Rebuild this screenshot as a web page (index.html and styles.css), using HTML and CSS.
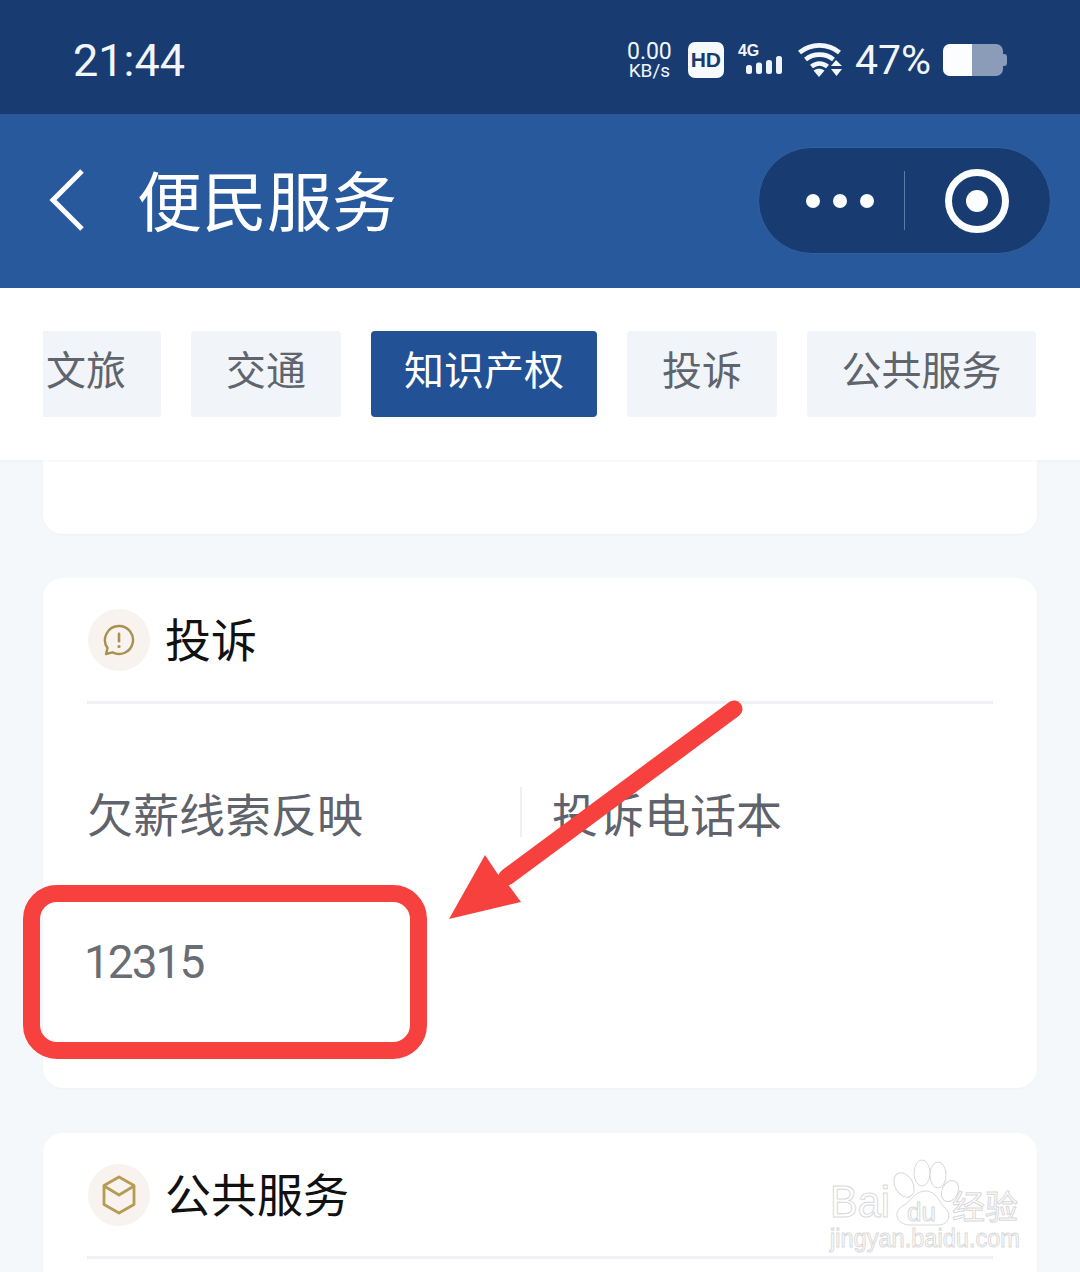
FILE: index.html
```html
<!DOCTYPE html>
<html lang="zh">
	<head>
		<meta charset="utf-8" />
		<title>便民服务</title>
		<link rel="stylesheet" href="styles.css">
	</head>
	<body>
		<div class="page">
			<div class="status-bar">
				<span class="clock">21:44</span>
				<div class="status-icons">
					<div class="speed"><span class="speed-num">0.00</span><span class="speed-unit">KB/s</span></div>
					<span class="hd">HD</span>
					<div class="signal">
						<span class="signal-label">4G</span>
						<svg class="signal-bars" width="36" height="18" viewBox="0 0 36 18">
							<rect x="0" y="9" width="6" height="9" rx="2.5" fill="#eef4fa" />
							<rect x="10" y="6.5" width="6" height="11.5" rx="2.5" fill="#eef4fa" />
							<rect x="20" y="4" width="6" height="14" rx="2.5" fill="#eef4fa" />
							<rect x="30" y="0" width="6" height="18" rx="2.5" fill="#eef4fa" />
						</svg>
					</div>
					<svg class="wifi" width="45" height="36" viewBox="0 0 45 36">
						<g fill="none" stroke="#f5f8fb" stroke-width="4.6">
							<path d="M1.5 10.5C13 1 30 1 41.5 10.5" />
							<path d="M7.5 17.5C15.5 11 27.5 11 35.5 17.5" />
							<path d="M13.5 24.5C18.5 20.5 24.5 20.5 29.5 24.5" />
						</g>
						<path d="M15.5 28.5C19 26 23 26 26.5 28.5L21 35Z" fill="#f5f8fb" />
						<path d="M33 24L38 18L44 24Z" fill="#f5f8fb" />
						<path d="M33 27H44L38.500 34Z" fill="#f5f8fb" />
					</svg>
					<span class="percent">47%</span>
					<div class="battery"><div class="battery-fill"></div></div>
				</div>
			</div>
			<div class="nav-bar">
				<svg class="back" width="38" height="64" viewBox="0 0 38 64">
					<path d="M34 3L5 32L34 61" fill="none" stroke="#fff" stroke-width="5" />
				</svg>
				<h1 class="nav-title">便民服务</h1>
				<div class="capsule">
					<div class="capsule-dots"><i></i><i></i><i></i></div>
					<div class="capsule-line"></div>
					<div class="capsule-target"><i></i></div>
				</div>
			</div>
			<div class="tabs-wrap">
				<div class="tabs">
					<a class="tab tab-first">文旅</a>
					<a class="tab">交通</a>
					<a class="tab tab-wide active">知识产权</a>
					<a class="tab">投诉</a>
					<a class="tab tab-last">公共服务</a>
				</div>
			</div>
			<div class="content">
				<div class="card card-stub"></div>
				<div class="card card-complain">
					<div class="card-head">
						<span class="head-icon">
							<svg width="34" height="34" viewBox="0 0 34 34">
								<path d="M17 3A14 14 0 1 1 10.500 29.400L4 31L5.500 25A14 14 0 0 1 17 3Z" fill="none" stroke="#a8914f" stroke-width="2.400" stroke-linejoin="round" />
								<rect x="15.700" y="9.500" width="2.600" height="10" rx="1.300" fill="#a8914f" />
								<circle cx="17" cy="23.500" r="1.600" fill="#a8914f" />
							</svg>
						</span>
						<span class="head-title">投诉</span>
					</div>
					<div class="links links-top">
						<span class="link link-left">欠薪线索反映</span>
						<span class="link link-right">投诉电话本</span>
					</div>
					<div class="links links-num">
						<span class="link-num">12315</span>
					</div>
				</div>
				<div class="card card-last">
					<div class="card-head">
						<span class="head-icon">
							<svg width="36" height="40" viewBox="0 0 36 40">
								<g fill="none" stroke="#b69c52" stroke-width="2.800" stroke-linejoin="round">
									<path d="M18 2L33 10.500V29.500L18 38L3 29.500V10.500Z" />
									<path d="M3 11L18 20L33 11" />
								</g>
							</svg>
						</span>
						<span class="head-title">公共服务</span>
					</div>
				</div>
			</div>
		</div>

		<!-- red markup drawn over the screenshot -->
		<div class="mark-box"></div>
		<svg class="mark-arrow" width="300" height="230" viewBox="0 0 300 230">
			<path d="M287 10L60 178" fill="none" stroke="#f6413f" stroke-width="17" stroke-linecap="round" />
			<path d="M2 220L38 156L50 174L63 188L74 203Z" fill="#f6413f" />
		</svg>

		<svg class="watermark" width="210" height="110" viewBox="0 0 210 110">
			<g fill="#fff" stroke="#d9d9d9" stroke-width="1">
				<ellipse cx="76" cy="30" rx="9" ry="13" transform="rotate(-30 76 30)" />
				<ellipse cx="94" cy="18" rx="8" ry="13" />
				<ellipse cx="110" cy="20" rx="8" ry="13" />
				<ellipse cx="122" cy="36" rx="8" ry="11" transform="rotate(25 122 36)" />
				<path d="M98 36C108 36 112 48 116 52C124 58 122 70 110 70H82C68 70 64 56 76 50C84 46 86 36 98 36Z" />
				<text x="2" y="62" class="wm-big" textLength="60" lengthAdjust="spacingAndGlyphs">Bai</text>
				<text x="79" y="66" class="wm-du">du</text>
				<text x="124" y="64" class="wm-cn">经验</text>
				<text x="2" y="92" class="wm-url" textLength="190" lengthAdjust="spacingAndGlyphs">jingyan.baidu.com</text>
			</g>
		</svg>
	</body>
</html>
```

FILE: styles.css
```css
* {
	box-sizing: border-box;
}

html,
body {
	margin: 0;
	height: 1272px;
	overflow: hidden;
}

body {
	position: relative;
	width: 1080px;
	background: #f5f8fb;
	font-family: "Noto Sans CJK SC", "Noto Sans", sans-serif;
}

.page {
	display: flex;
	flex-direction: column;
	height: 1272px;
}

/* status bar */
.status-bar {
	flex: none;
	height: 114px;
	padding: 6px 73px 0 73px;
	display: flex;
	align-items: center;
	justify-content: space-between;
	background: #183c72;
	color: #f2f6fa;
}

.clock {
	font-family: Roboto, sans-serif;
	font-size: 45px;
	line-height: 1;
}

.status-icons {
	display: flex;
	align-items: center;
}

.speed {
	width: 45px;
	display: flex;
	flex-direction: column;
	align-items: center;
	font-family: Roboto, sans-serif;
	margin-right: 16px;
}

.speed-num {
	font-size: 23px;
	line-height: 20px;
}

.speed-unit {
	font-size: 19px;
	line-height: 17px;
}

.hd {
	width: 36px;
	height: 36px;
	margin-right: 14px;
	border-radius: 7px;
	background: #f7fafc;
	color: #183c72;
	font-family: "Liberation Sans", sans-serif;
	font-weight: bold;
	font-size: 21px;
	line-height: 36px;
	text-align: center;
}

.signal {
	width: 44px;
	height: 32px;
	margin-right: 16px;
	display: flex;
	flex-direction: column;
}

.signal-label {
	font-family: "Liberation Sans", sans-serif;
	font-weight: bold;
	font-size: 16px;
	line-height: 14px;
}

.signal-bars {
	align-self: flex-end;
	margin-top: -2px;
}

.wifi {
	margin-right: 12px;
}

.percent {
	font-family: Roboto, sans-serif;
	font-size: 41px;
	line-height: 1;
	margin-right: 12px;
}

.battery {
	position: relative;
	width: 60px;
	height: 32px;
	margin-right: 4px;
	border-radius: 7px;
	background: #8b9cb9;
}

.battery::after {
	content: "";
	position: absolute;
	right: -4px;
	top: 10px;
	width: 4px;
	height: 12px;
	border-radius: 0 3px 3px 0;
	background: #8b9cb9;
}

.battery-fill {
	width: 29px;
	height: 100%;
	border-radius: 7px 0 0 7px;
	background: #fbfdfe;
}

/* title bar */
.nav-bar {
	flex: none;
	height: 174px;
	padding: 0 29px 1px 48px;
	display: flex;
	align-items: center;
	background: #27599c;
}

.back {
	flex: none;
	margin-top: -2px;
}

.nav-title {
	margin: -5px 0 0 51px;
	flex: 1;
	color: #fff;
	font-size: 65px;
	font-weight: 400;
	line-height: 1;
}

.capsule {
	flex: none;
	width: 293px;
	height: 107px;
	display: flex;
	align-items: center;
	border: 1px solid #32619f;
	border-radius: 54px;
	background: #183c72;
}

.capsule-dots {
	width: 145px;
	display: flex;
	justify-content: flex-end;
	gap: 13px;
	padding-right: 30px;
}

.capsule-dots i {
	width: 14px;
	height: 14px;
	border-radius: 50%;
	background: #fbfdfe;
}

.capsule-line {
	width: 1px;
	height: 59px;
	background: #5c7ba6;
}

.capsule-target {
	width: 64px;
	height: 64px;
	margin-left: 40px;
	display: flex;
	align-items: center;
	justify-content: center;
	border: 7px solid #fbfdfe;
	border-radius: 50%;
}

.capsule-target i {
	width: 22px;
	height: 22px;
	border-radius: 50%;
	background: #fbfdfe;
}

/* tabs */
.tabs-wrap {
	flex: none;
	height: 172px;
	padding: 43px 43px 0 43px;
	background: #fff;
	box-shadow: 0 1px 3px rgba(40, 60, 90, 0.05);
	position: relative;
	z-index: 1;
}

.tabs {
	display: flex;
	gap: 30px;
	overflow: hidden;
}

.tab {
	flex: none;
	height: 86px;
	padding: 0 35px;
	border-radius: 4px;
	background: #f1f4f9;
	color: #5f646d;
	font-size: 40px;
	line-height: 74px;
}

.tab-first {
	margin-left: -32px;
}

.tab-wide {
	padding: 0 33px;
}

.tab-last {
	padding: 0 34.5px;
}

.tab.active {
	background: #225196;
	color: #fff;
}

/* cards */
.content {
	flex: 1;
	min-height: 0;
	padding: 0 43px;
	display: flex;
	flex-direction: column;
	gap: 44px;
	overflow: hidden;
}

.card {
	flex: none;
	padding: 0 44px;
	border-radius: 20px;
	background: #fff;
	box-shadow: 0 1px 2px rgba(40, 60, 90, 0.03);
}

.card-stub {
	height: 74px;
	border-radius: 0 0 20px 20px;
}

.card-complain {
	height: 510px;
	margin-bottom: 1px;
}

.card-last {
	height: 300px;
}

.card-head {
	height: 126px;
	display: flex;
	align-items: center;
	gap: 15px;
	border-bottom: 3px solid #eef0f3;
}

.head-icon {
	flex: none;
	width: 62px;
	height: 62px;
	margin-left: 1px;
	display: flex;
	align-items: center;
	justify-content: center;
	border-radius: 50%;
	background: #f8f3ef;
}

.head-title {
	margin-top: -5px;
	color: #111;
	font-size: 46px;
	line-height: 1;
}

.links {
	display: flex;
	align-items: center;
	color: #5f636b;
	font-size: 46px;
	line-height: 1;
}

.links-top {
	height: 216px;
}

.links-num {
	height: 84px;
}

.link {
	display: flex;
	align-items: center;
	height: 50px;
}

.link-left {
	width: 433px;
}

.link-right {
	padding-left: 30px;
	border-left: 2px solid #eef0f3;
}

.link-num {
	margin-left: -3px;
	font-family: Roboto, sans-serif;
	letter-spacing: -2px;
	color: #6a6d73;
}

/* markup */
.mark-box {
	position: absolute;
	left: 23px;
	top: 885px;
	width: 404px;
	height: 174px;
	border: 17px solid #f6413f;
	border-radius: 34px;
}

.mark-arrow {
	position: absolute;
	left: 447px;
	top: 699px;
}

.watermark {
	position: absolute;
	left: 828px;
	top: 1155px;
}

.wm-big {
	font-family: "Liberation Sans", sans-serif;
	font-size: 44px;
}

.wm-du {
	font-family: "Liberation Sans", sans-serif;
	font-size: 26px;
}

.wm-cn {
	font-size: 33px;
}

.wm-url {
	font-family: "Liberation Sans", sans-serif;
	font-size: 26px;
}
```
